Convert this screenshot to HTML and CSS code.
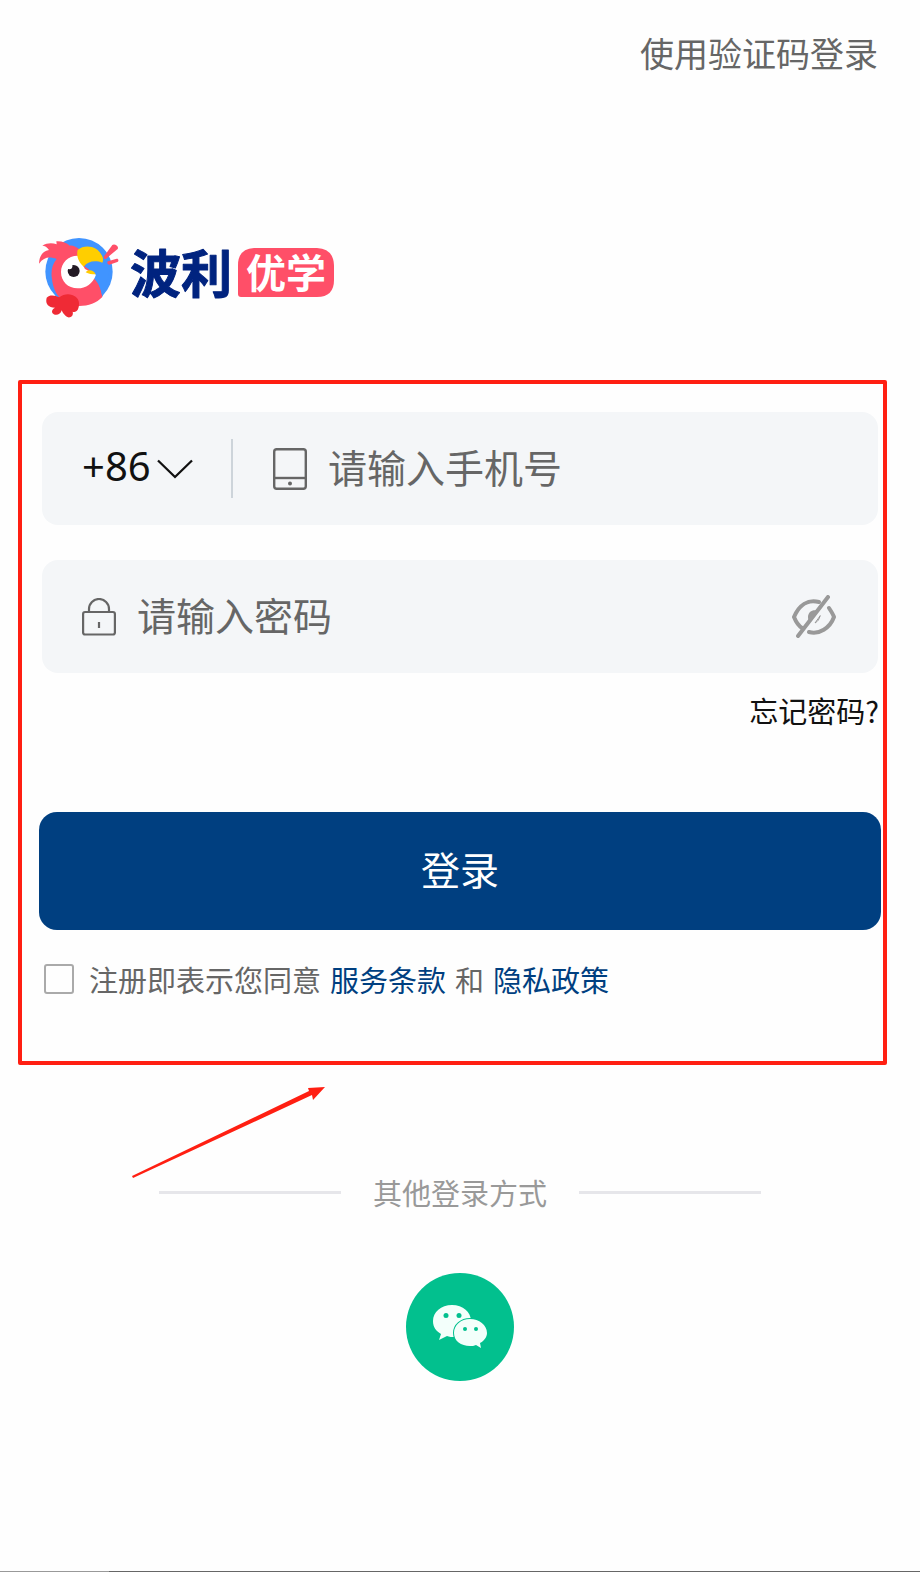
FILE: index.html
```html
<!DOCTYPE html>
<html lang="zh-CN">
	<head>
		<meta charset="utf-8">
		<title>波利优学 - 登录</title>
		<meta name="viewport" content="width=device-width, initial-scale=1">
		<link rel="stylesheet" href="styles.css">
	</head>
	<body>
		<header class="top">
			<a class="top-link" href="#code">使用验证码登录</a>
		</header>

		<main class="main">
			<svg class="logo" width="300" height="104" viewBox="0 -20 300 104">
				<!-- parrot -->
				<svg width="84" height="84" viewBox="27 27 252 252">
					<circle cx="147" cy="128" r="101" fill="#4094ff"/>
					<path d="M27 104C28 80 38 67 57 63C52 54 44 50 37 50C52 41 68 42 80 46C80 42 79 39 79 37C95 36 110 41 119 50C128 48 140 55 147 60L190 146C206 160 214 180 217 204C200 222 175 231 148 231C100 231 70 195 66 150C62 130 66 105 80 90C58 82 42 84 27 104Z" fill="#ff4f68"/>
					<path d="M163 112C172 96 195 92 218 100L240 120L217 204C212 175 204 158 190 148L198 136Z" fill="#4094ff"/>
					<path d="M143 80C114 80 93 102 93 129C93 157 114 178 143 178C168 178 188 164 198 137L165 120Z" fill="#fff"/>
					<path d="M143 63C165 45 205 50 218 85C220 92 219 98 217 101C195 92 172 97 161 113C146 100 138 80 143 63Z" fill="#ffce00"/>
					<path d="M167 130C172 122 190 120 197 136C185 136 176 135 167 130Z" fill="#ffce00"/>
					<circle cx="131" cy="126" r="18" fill="#231a24"/>
					<circle cx="118" cy="112" r="9" fill="#fff"/>
					<path d="M222 82L247 48C252 43 268 50 263 60L228 89C223 92 219 87 222 82Z" fill="#ff4f68"/>
					<path d="M234 97L260 89C266 88 267 97 262 99L238 107C232 107 230 99 234 97Z" fill="#ff4f68"/>
					<path d="M50 206C60 195 78 200 88 205C110 186 147 198 147 222C148 240 140 252 128 248C132 262 118 270 108 262C102 256 98 252 95 244C92 258 75 262 67 252C64 245 68 240 75 236C55 235 45 225 50 206Z" fill="#ef2a35"/>
				</svg>
				<!-- name -->
				<text class="logo-name" x="91" y="55">波利</text>
				<path d="M215 10H278Q295 11 295 28V42Q295 59 278 59H202Q199 59 199 56V27Q199 11 215 10Z" fill="#ff4f68"/>
				<text class="logo-tag" x="207" y="50">优学</text>
			</svg>

			<form class="form" action="#">
				<div class="field">
					<label class="code">
						<select class="code-select" aria-label="区号">
							<option>+86</option>
						</select>
						<svg width="36" height="20" viewBox="0 0 36 20" fill="none" stroke="#111" stroke-width="2.300">
							<path d="M1 1.500L18 18L35 1.500"/>
						</svg>
					</label>
					<label class="phone" for="phone">
						<svg width="34" height="42" viewBox="0 0 34 42" fill="none" stroke="#666" stroke-width="2.400">
							<rect x="1.200" y="1.200" width="31.600" height="39.600" rx="2.500"/>
							<path d="M1 30H33"/>
							<circle cx="17" cy="35.500" r="2" fill="#666" stroke="none"/>
						</svg>
					</label>
					<input class="input" id="phone" type="tel" placeholder="请输入手机号">
				</div>

				<div class="field">
					<label class="lock" for="password">
						<svg width="34" height="38" viewBox="0 0 34 38" fill="none" stroke="#666" stroke-width="2.200">
							<path d="M7 14V11A10 10 0 0 1 27 11V14"/>
							<rect x="1.100" y="14" width="31.800" height="22.500" rx="2"/>
							<path d="M17 24V30"/>
						</svg>
					</label>
					<input class="input" id="password" type="password" placeholder="请输入密码">
					<button class="eye" type="button" aria-label="显示密码">
						<svg width="44" height="44" viewBox="0 0 44 44" fill="none" stroke="#999" stroke-width="4" stroke-linecap="round">
							<path d="M27 7C16 4 7 10 2 22C4 27 7 31 10 33"/>
							<path d="M37 13C39 16 41 19 42 22C38 33 27 40 17 37"/>
							<path d="M36 2L6 41"/>
							<path d="M26 16C21 14 16 17 16 22C16 25 17 26 18 27Z" fill="#999" stroke="none"/>
							<path d="M28 21C27 25 26 26 23 28L28 21Z" stroke-width="1"/>
						</svg>
					</button>
				</div>

				<a class="forget" href="#forget">忘记密码?</a>

				<button class="submit" type="submit">登录</button>

				<div class="agree">
					<input class="agree-box" id="agree" type="checkbox">
					<div class="agree-text">
						<label for="agree">注册即表示您同意</label>
						<a href="#terms">服务条款</a>
						<span>和</span>
						<a href="#privacy">隐私政策</a>
					</div>
				</div>

				<!-- arrow pointing at the form -->
				<svg class="arrow" width="194" height="92" viewBox="0 0 194 92" fill="#ff1f12">
					<path d="M0 89L177 4L176 1L193 0L181 13L180 8L1 91Z"/>
				</svg>
			</form>

			<div class="other">
				<span class="line"></span>
				<span>其他登录方式</span>
				<span class="line"></span>
			</div>

			<button class="wechat" type="button" aria-label="微信登录">
				<svg width="54" height="44" viewBox="0 0 54 44">
					<path d="M19 0C8 0 0 7 0 16C0 22 3 26 8 29L6 35L14 31C16 32 19 32 22 32C36 32 38 22 38 16C38 7 30 0 19 0Z" fill="#f3fffb"/>
					<circle cx="13" cy="10.500" r="2.500" fill="#02c08e"/>
					<circle cx="26" cy="10.500" r="2.500" fill="#02c08e"/>
					<path d="M37 14C28 14 21 20 21 28C21 36 28 41 37 41C39 41 41 41 43 40L48 43L47 38C51 36 54 32 54 28C54 20 46 14 37 14Z" fill="#f3fffb" stroke="#02c08e" stroke-width="2" paint-order="stroke"/>
					<circle cx="32" cy="24" r="2" fill="#02c08e"/>
					<circle cx="43" cy="24" r="2" fill="#02c08e"/>
				</svg>
			</button>
		</main>

		<footer class="bottom"></footer>
	</body>
</html>
```

FILE: styles.css
```css
* {box-sizing: border-box;}

body {
	display: flex;
	flex-direction: column;
	min-height: 100vh;
	margin: 0;
	background-color: #fefefe;
	color: #666;
	font-family: "Noto Sans CJK SC", sans-serif;
	font-size: 29px;
	line-height: 42px;
}

a {
	color: #003f80;
	text-decoration: none;
}

svg {
	display: block;
	flex: none;
}

button, input, select {
	margin: 0;
	padding: 0;
	border: none;
	background: none;
	font-family: inherit;
}

.top {
	display: flex;
	justify-content: flex-end;
	padding: 32px 42px 0;
}

.top .top-link {
	color: #666;
	font-size: 34px;
}

.main {
	flex: 1;
	padding-top: 144px;
}

.logo {
	margin-left: 39px;
}

.logo-name, .logo-tag {
	font-weight: bold;
	stroke-width: 1px;
	stroke-linejoin: round;
}

.logo-name {
	fill: #00237f;
	stroke: #00237f;
	font-size: 51px;
}

.logo-tag {
	fill: #fff;
	font-size: 40px;
}

.form {
	position: relative;
	display: flex;
	flex-direction: column;
	margin: 58px 33px 0 18px;
	padding: 28px 2px 61px 17px;
	border: 4px solid #ff1f12;
	border-radius: 2px;
}

.field {
	display: flex;
	align-items: center;
	height: 113px;
	margin: 0 3px 35px;
	padding: 0 42px 0 40px;
	border-radius: 16px;
	background-color: #f4f6f8;
}

.code {
	display: flex;
	align-items: center;
	gap: 6px;
	height: 59px;
	padding-right: 38px;
	border-right: 2px solid #cdd4da;
}

.code-select {
	appearance: none;
	padding-bottom: 6px;
	color: #111;
	font-family: "Noto Sans", sans-serif;
	font-size: 40px;
}

.phone {
	margin-left: 40px;
}

.input {
	flex: 1;
	min-width: 0;
	height: 60px;
	margin-left: 21px;
	padding-bottom: 6px;
	outline: none;
	color: #111;
	font-size: 39px;
}

.input::placeholder {
	color: #666;
	opacity: 1;
}

.eye {
	cursor: pointer;
}

.forget {
	align-self: flex-end;
	margin: -19px 2px 0;
	color: #111;
}

.submit {
	height: 118px;
	margin-top: 81px;
	padding-bottom: 6px;
	border-radius: 18px;
	background-color: #003f80;
	color: #fff;
	font-size: 39px;
	cursor: pointer;
}

.agree {
	display: flex;
	align-items: center;
	gap: 15px;
	margin: 28px 0 0 5px;
}

.agree-box {
	appearance: none;
	width: 30px;
	height: 30px;
	border: 2px solid #aaa;
	border-radius: 3px;
}

.agree-box:checked {
	background-color: #003f80;
}

.agree-text {
	display: flex;
	flex-wrap: wrap;
	gap: 0 9px;
}

.arrow {
	position: absolute;
	top: 100%;
	left: 110px;
	margin-top: 26px;
}

.other {
	display: flex;
	align-items: center;
	justify-content: center;
	gap: 32px;
	margin-top: 106px;
	color: #999;
}

.line {
	width: 182px;
	height: 3px;
	background-color: #e6e6ea;
}

.wechat {
	display: flex;
	align-items: center;
	justify-content: center;
	width: 108px;
	height: 108px;
	margin: 60px auto 0;
	border-radius: 50%;
	background-color: #02c08e;
	cursor: pointer;
}

.bottom {
	height: 1px;
	background: linear-gradient(to right, #999 109px, #666 109px);
}
```
